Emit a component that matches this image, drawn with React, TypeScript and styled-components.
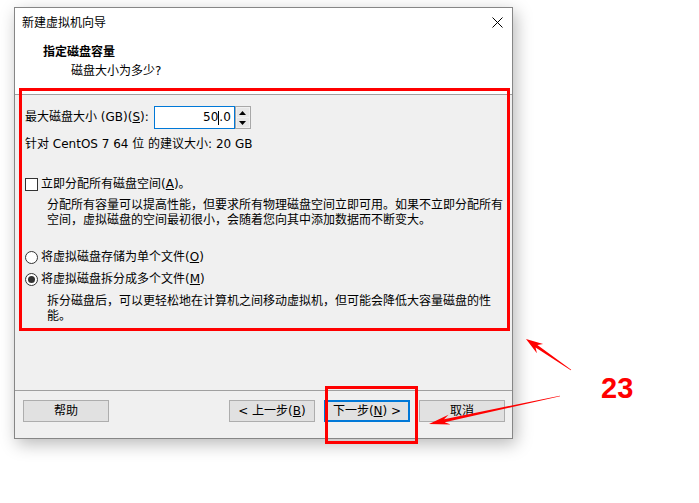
import React from "react";
import styled, { createGlobalStyle } from "styled-components";

const GlobalStyle = createGlobalStyle`
  html, body {
    margin: 0;
    padding: 0;
    background: #ffffff;
  }
  body {
    font-family: "DejaVu Sans", "Noto Sans CJK SC", sans-serif;
    font-size: 12px;
    color: #000;
  }
`;

type Pt = [number, number];

// tapered annotation arrow, thin at the tail, barbed head at the tip
const arrowPoints = (tail: Pt, tip: Pt, headLen: number, headW: number, shaftW: number) => {
  const [tx, ty] = tail;
  const [px, py] = tip;
  const len = Math.hypot(px - tx, py - ty);
  const ux = (px - tx) / len;
  const uy = (py - ty) / len;
  const nx = -uy;
  const ny = ux;
  const bx = px - ux * headLen;
  const by = py - uy * headLen;
  const kx = px - ux * headLen * 0.75;
  const ky = py - uy * headLen * 0.75;
  const pts: Pt[] = [
    [tx + nx * 0.3, ty + ny * 0.3],
    [kx + (nx * shaftW) / 2, ky + (ny * shaftW) / 2],
    [bx + nx * headW, by + ny * headW],
    [px, py],
    [bx - nx * headW, by - ny * headW],
    [kx - (nx * shaftW) / 2, ky - (ny * shaftW) / 2],
    [tx - nx * 0.3, ty - ny * 0.3],
  ];
  return pts.map(([x, y]) => `${x.toFixed(1)},${y.toFixed(1)}`).join(" ");
};

const App = () => {
  return (
    <>
      <GlobalStyle />
      <Stage>
        <Window>
          <TitleBar>
            <TitleText>新建虚拟机向导</TitleText>
            <CloseIcon width="11" height="11" viewBox="0 0 11 11">
              <path d="M0.5 0.5 L10.5 10.5 M10.5 0.5 L0.5 10.5" stroke="#000" strokeWidth="1" />
            </CloseIcon>
          </TitleBar>
          <Header>
            <HeaderTitle>指定磁盘容量</HeaderTitle>
            <HeaderSub>磁盘大小为多少?</HeaderSub>
          </Header>
          <Body>
            <SizeRow>
              <span>
                最大磁盘大小 (GB)(<u>S</u>):
              </span>
              <NumberField>
                <NumberInput>
                  50
                  <Caret />
                  .0
                </NumberInput>
                <Spinner>
                  <SpinButton>
                    <svg width="7" height="4" viewBox="0 0 7 4">
                      <path d="M0 4 L3.5 0 L7 4 Z" fill="#000" />
                    </svg>
                  </SpinButton>
                  <SpinButton>
                    <svg width="7" height="4" viewBox="0 0 7 4">
                      <path d="M0 0 L3.5 4 L7 0 Z" fill="#000" />
                    </svg>
                  </SpinButton>
                </Spinner>
              </NumberField>
            </SizeRow>
            <Line $top={8}>针对 CentOS 7 64 位 的建议大小: 20 GB</Line>
            <OptionRow $top={25}>
              <CheckBox />
              <span>
                立即分配所有磁盘空间(<u>A</u>)。
              </span>
            </OptionRow>
            <Description $top={6}>
              分配所有容量可以提高性能，但要求所有物理磁盘空间立即可用。如果不立即分配所有
              <br />
              空间，虚拟磁盘的空间最初很小，会随着您向其中添加数据而不断变大。
            </Description>
            <OptionRow $top={22}>
              <Radio />
              <span>
                将虚拟磁盘存储为单个文件(<u>O</u>)
              </span>
            </OptionRow>
            <OptionRow $top={7}>
              <Radio $checked />
              <span>
                将虚拟磁盘拆分成多个文件(<u>M</u>)
              </span>
            </OptionRow>
            <Description $top={7}>
              拆分磁盘后，可以更轻松地在计算机之间移动虚拟机，但可能会降低大容量磁盘的性
              <br />
              能。
            </Description>
          </Body>
          <Footer>
            <Button>帮助</Button>
            <ButtonGroup>
              <Button>
                &lt; 上一步(<u>B</u>)
              </Button>
              <Button $primary>
                下一步(<u>N</u>) &gt;
              </Button>
              <Button>取消</Button>
            </ButtonGroup>
          </Footer>
        </Window>

        <Highlight style={{ left: 19, top: 88, width: 491, height: 243 }} />
        <Highlight style={{ left: 325, top: 386, width: 93, height: 58 }} />

        <Arrows width="699" height="503" viewBox="0 0 699 503">
          <polygon points={arrowPoints([571, 370], [526, 339], 17, 5.5, 3)} fill="#ff0000" />
          <polygon points={arrowPoints([560, 396], [429, 424], 21, 5, 3)} fill="#ff0000" />
        </Arrows>
        <StepNumber>23</StepNumber>
      </Stage>
    </>
  );
};

export default App;

const Stage = styled.div`
  position: relative;
  width: 699px;
  height: 503px;
  padding: 7px 0 0 14px;
  box-sizing: border-box;
  background: #fff;
  overflow: hidden;
`;

const Window = styled.div`
  width: 499px;
  height: 432px;
  box-sizing: border-box;
  border: 1px solid #868686;
  background: #f0f0f0;
  display: flex;
  flex-direction: column;
  box-shadow: 3px 5px 16px rgba(0, 0, 0, 0.28);
`;

const TitleBar = styled.div`
  height: 29px;
  flex: none;
  display: flex;
  align-items: center;
  justify-content: space-between;
  padding: 0 9px 0 7px;
  background: #fff;
`;

const TitleText = styled.span`
  font-size: 12px;
  line-height: 16px;
`;

const CloseIcon = styled.svg`
  display: block;
`;

const Header = styled.div`
  height: 57px;
  flex: none;
  box-sizing: content-box;
  background: #fff;
  border-bottom: 1px solid #a0a0a0;
  padding: 0 0 0 28px;
  display: flex;
  flex-direction: column;
`;

const HeaderTitle = styled.div`
  margin-top: 7px;
  font-weight: 700;
  font-size: 12px;
  line-height: 16px;
`;

const HeaderSub = styled.div`
  margin: 3px 0 0 28px;
  font-size: 12px;
  line-height: 16px;
`;

const Body = styled.div`
  flex: 1;
  padding: 11px 0 0 10px;
  display: flex;
  flex-direction: column;
`;

const SizeRow = styled.div`
  display: flex;
  align-items: center;
  height: 23px;
  gap: 5px;
  line-height: 15px;
`;

const NumberField = styled.div`
  display: flex;
  height: 23px;
`;

const NumberInput = styled.div`
  width: 81px;
  height: 23px;
  box-sizing: border-box;
  border: 1px solid #0078d7;
  background: #fff;
  display: flex;
  align-items: center;
  justify-content: flex-end;
  padding-right: 3px;
  font-size: 12px;
`;

const Caret = styled.span`
  display: inline-block;
  width: 1px;
  height: 14px;
  background: #000;
`;

const Spinner = styled.div`
  width: 16px;
  height: 23px;
  box-sizing: border-box;
  border: 1px solid #a8a8a8;
  background: #f0f0f0;
  display: flex;
  flex-direction: column;
  padding: 1px;
  gap: 1px;
`;

const SpinButton = styled.div`
  flex: 1;
  background: #e6e6e6;
  display: flex;
  align-items: center;
  justify-content: center;
`;

const Line = styled.div<{ $top: number }>`
  margin-top: ${(p) => p.$top}px;
  line-height: 15px;
`;

const OptionRow = styled.div<{ $top: number }>`
  margin-top: ${(p) => p.$top}px;
  display: flex;
  align-items: center;
  gap: 3px;
  line-height: 15px;
`;

const CheckBox = styled.span`
  width: 13px;
  height: 13px;
  box-sizing: border-box;
  border: 1px solid #333;
  background: #fff;
  flex: none;
`;

const Radio = styled.span<{ $checked?: boolean }>`
  width: 13px;
  height: 13px;
  box-sizing: border-box;
  border: 1px solid #333;
  border-radius: 50%;
  background: #fff;
  flex: none;
  display: flex;
  align-items: center;
  justify-content: center;
  &::after {
    content: "";
    width: 7px;
    height: 7px;
    border-radius: 50%;
    background: ${(p) => (p.$checked ? "#333" : "transparent")};
  }
`;

const Description = styled.div<{ $top: number }>`
  margin: ${(p) => p.$top}px 0 0 22px;
  line-height: 15px;
  white-space: nowrap;
`;

const Footer = styled.div`
  height: 38px;
  flex: none;
  border-top: 1px solid #a0a0a0;
  padding: 9px 7px 0 8px;
  display: flex;
  align-items: flex-start;
  justify-content: space-between;
`;

const ButtonGroup = styled.div`
  display: flex;
  gap: 9px;
`;

const Button = styled.div<{ $primary?: boolean }>`
  width: 86px;
  height: 22px;
  box-sizing: border-box;
  border: ${(p) => (p.$primary ? "2px solid #0078d7" : "1px solid #adadad")};
  background: #e1e1e1;
  display: flex;
  align-items: center;
  justify-content: center;
  font-size: 12px;
  line-height: 15px;
`;

const Highlight = styled.div`
  position: absolute;
  box-sizing: border-box;
  border: 3px solid #ff0000;
  pointer-events: none;
`;

const Arrows = styled.svg`
  position: absolute;
  left: 0;
  top: 0;
  pointer-events: none;
`;

const StepNumber = styled.div`
  position: absolute;
  left: 601px;
  top: 371px;
  font-family: "Liberation Sans", Arial, sans-serif;
  font-weight: 700;
  font-size: 29px;
  line-height: 34px;
  color: #ff0000;
`;
